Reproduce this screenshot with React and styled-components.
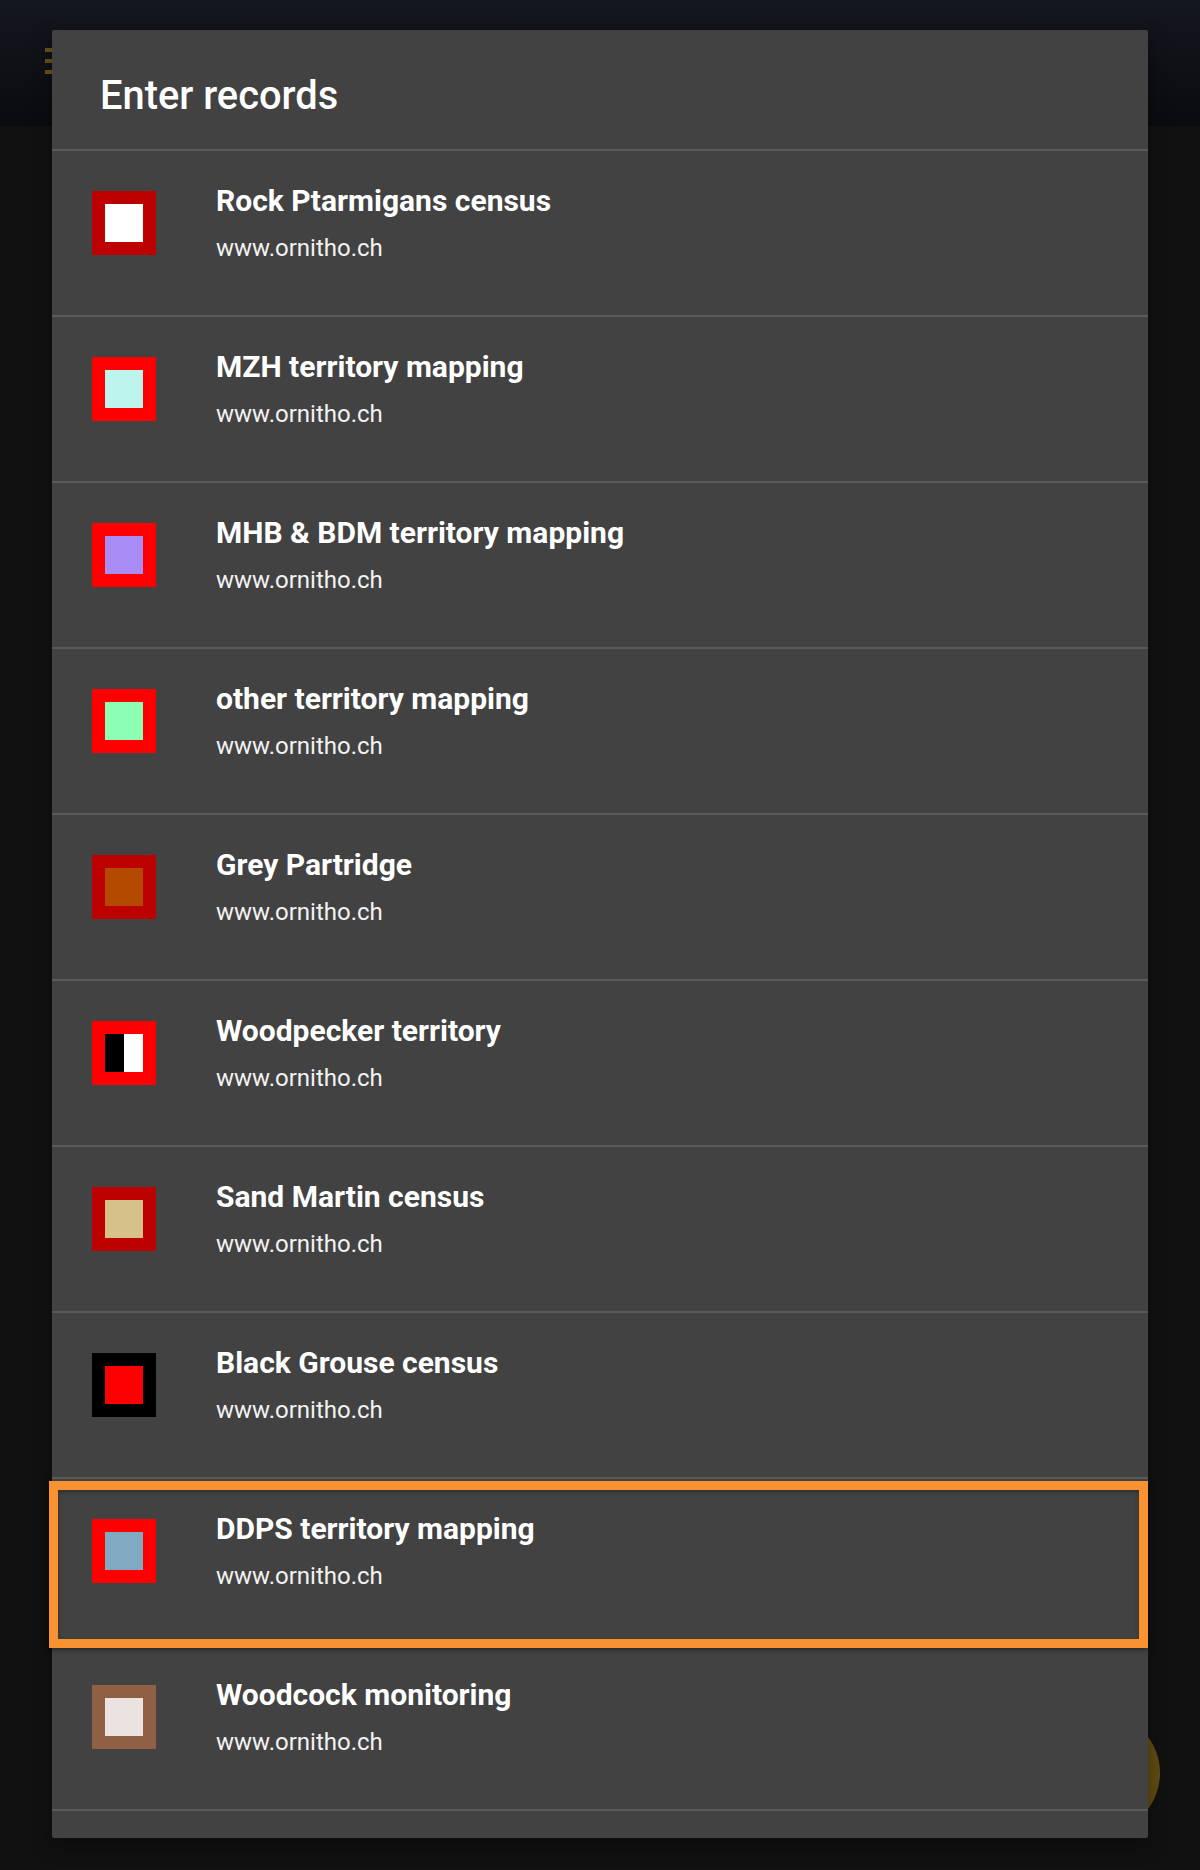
import styled, { createGlobalStyle } from "styled-components";

const RECORDS = [
  { title: "Rock Ptarmigans census", frame: "#bd0000", fill: "#ffffff" },
  { title: "MZH territory mapping", frame: "#ff0000", fill: "#bdf5ee" },
  { title: "MHB & BDM territory mapping", frame: "#ff0000", fill: "#a98bf5" },
  { title: "other territory mapping", frame: "#ff0000", fill: "#8cffb4" },
  { title: "Grey Partridge", frame: "#bd0000", fill: "#b34a00" },
  {
    title: "Woodpecker territory",
    frame: "#ff0000",
    fill: "linear-gradient(90deg, #000 50%, #fff 50%)",
  },
  { title: "Sand Martin census", frame: "#bd0000", fill: "#d6c187" },
  { title: "Black Grouse census", frame: "#000000", fill: "#ff0000" },
  { title: "DDPS territory mapping", frame: "#ff0000", fill: "#80a9c2", focused: true },
  { title: "Woodcock monitoring", frame: "#8f6043", fill: "#ebe3e0" },
];

const App = () => (
  <>
    <GlobalStyle />
    <Page>
      <TopBar>
        <MenuIcon>
          <span />
          <span />
          <span />
        </MenuIcon>
      </TopBar>
      <Fab />
      <Dialog>
        <DialogTitle>Enter records</DialogTitle>
        <RecordList>
          {RECORDS.map((r) => (
            <RecordRow key={r.title} $focused={r.focused}>
              <Swatch $frame={r.frame}>
                <SwatchFill $fill={r.fill} />
              </Swatch>
              <RecordText>
                <RecordTitle>{r.title}</RecordTitle>
                <RecordSite>www.ornitho.ch</RecordSite>
              </RecordText>
            </RecordRow>
          ))}
        </RecordList>
      </Dialog>
    </Page>
  </>
);

export default App;

const GlobalStyle = createGlobalStyle`
  html, body {
    margin: 0;
    padding: 0;
    background: #111111;
  }
  *, *::after {
    box-sizing: border-box;
  }
`;

const Page = styled.div`
  position: relative;
  width: 1200px;
  height: 1870px;
  overflow: hidden;
  background-color: #111111;
  font-family: Roboto, "Liberation Sans", sans-serif;
`;

const TopBar = styled.div`
  height: 126px;
  padding-left: 45px;
  display: flex;
  align-items: center;
  padding-bottom: 4px;
  background: linear-gradient(180deg, #14171e 0%, #0a0b0f 100%);
`;

const MenuIcon = styled.div`
  width: 30px;
  display: flex;
  flex-direction: column;
  gap: 7px;
  span {
    height: 4px;
    background-color: #6d5518;
  }
`;

const Fab = styled.div`
  position: absolute;
  left: 1040px;
  top: 1713px;
  width: 120px;
  height: 120px;
  border-radius: 50%;
  background-color: #5f4c13;
`;

const Dialog = styled.div`
  position: absolute;
  left: 52px;
  top: 30px;
  width: 1096px;
  height: 1808px;
  border-radius: 2px;
  background-color: #424242;
  box-shadow: 0 8px 20px rgba(0, 0, 0, 0.35);
  color: #ffffff;
`;

const DialogTitle = styled.div`
  height: 119px;
  padding: 41px 0 0 48px;
  font-size: 39.8px;
  line-height: 50px;
  font-weight: 500;
`;

const RecordList = styled.div`
  display: flex;
  flex-direction: column;
  border-bottom: 2px solid #5a5a5a;
`;

const RecordRow = styled.div`
  position: relative;
  height: 166px;
  padding: 40px 0 0 40px;
  display: flex;
  border-top: 2px solid #5a5a5a;

  ${(p) =>
    p.$focused &&
    `
    &::after {
      content: "";
      position: absolute;
      z-index: 1;
      left: -3px;
      right: 0;
      top: 2px;
      height: 167px;
      border: 9px solid #f99231;
      box-shadow: 0 2px 4px rgba(0, 0, 0, 0.4), inset 0 2px 4px rgba(0, 0, 0, 0.3);
    }
  `}
`;

const Swatch = styled.div`
  width: 64px;
  height: 64px;
  padding: 13px;
  background-color: ${(p) => p.$frame};
`;

const SwatchFill = styled.div`
  width: 38px;
  height: 38px;
  background: ${(p) => p.$fill};
`;

const RecordText = styled.div`
  margin-left: 60px;
  margin-top: -10px;
`;

const RecordTitle = styled.div`
  font-size: 30px;
  line-height: 40px;
  font-weight: 700;
`;

const RecordSite = styled.div`
  margin-top: 7px;
  font-size: 24px;
  line-height: 40px;
  color: #f2f2f2;
`;
